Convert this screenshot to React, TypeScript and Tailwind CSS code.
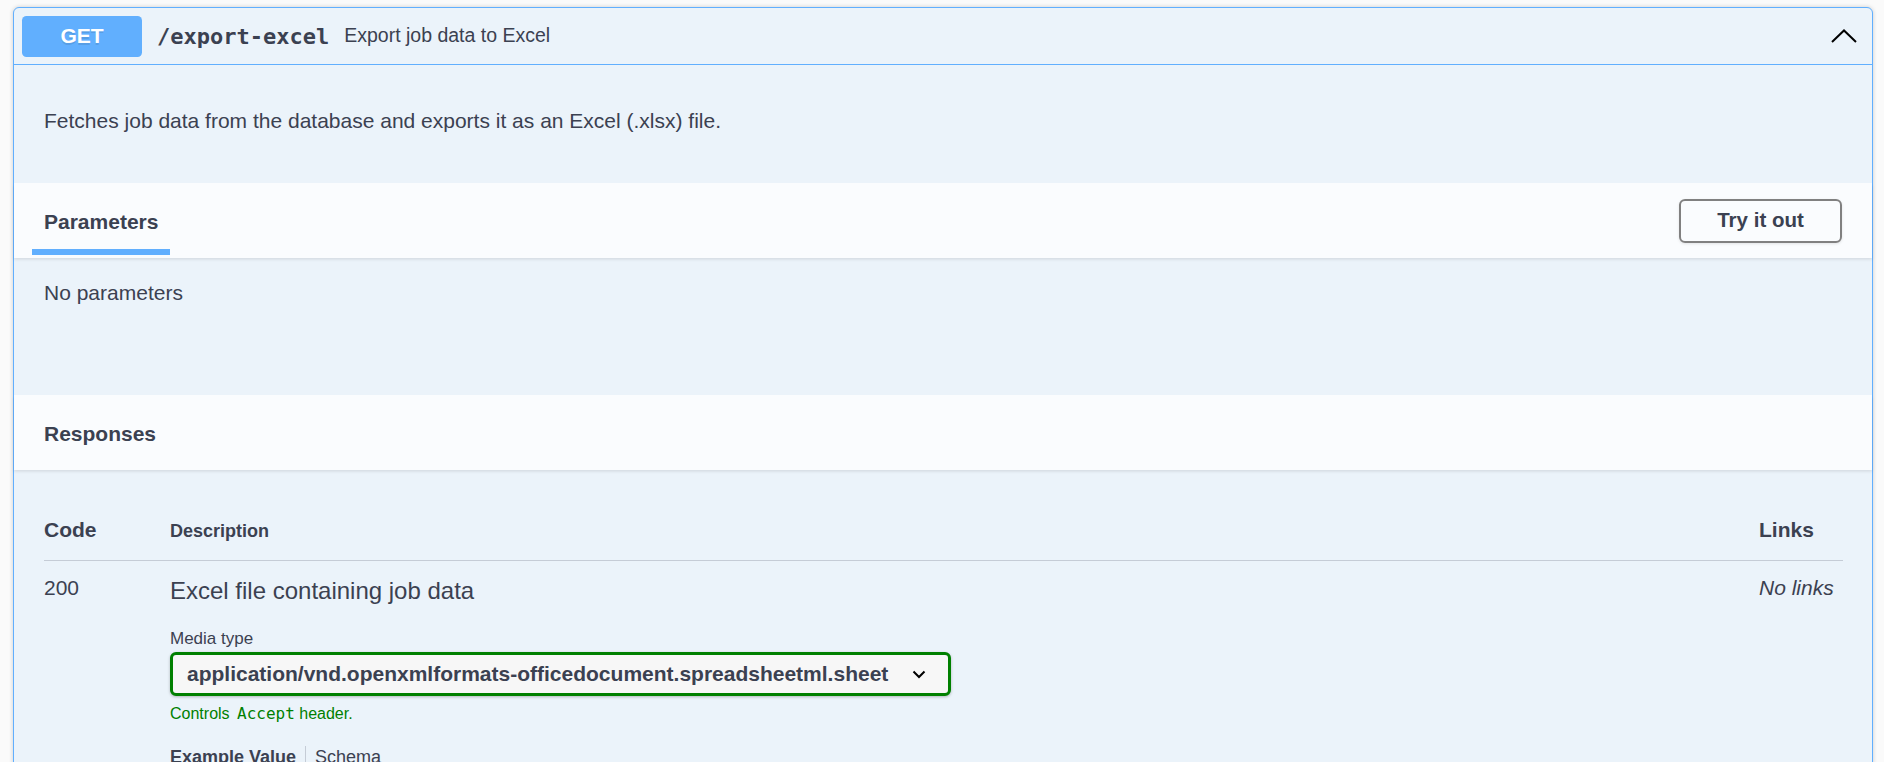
export default function App() {
  return (
    <div className="min-h-screen bg-[#fafafa] pt-[7px] pr-[11px] pb-[40px] pl-[13px] font-['Liberation_Sans',Arial,sans-serif] text-[#3b4151]">
      {/* operation block */}
      <div className="rounded-[6px] border border-[#61affe] bg-[#ebf3fa] shadow-[0_0_4.5px_rgba(0,0,0,0.19)]">
        {/* summary */}
        <div className="flex h-[57px] items-center border-b border-[#61affe] pr-[15px] pl-[8px]">
          <div className="flex h-[41px] w-[120px] items-center justify-center rounded-[4.5px] bg-[#61affe] text-[21px] font-bold text-white [text-shadow:0_1.5px_0_rgba(0,0,0,0.1)]">
            GET
          </div>
          <span className="px-[15px] font-['DejaVu_Sans_Mono',monospace] text-[22px] font-bold">/export-excel</span>
          <span className="text-[19.5px]">Export job data to Excel</span>
          <svg className="ml-auto" width="26" height="14" viewBox="0 0 26 14" fill="none">
            <polyline points="1,13 13,1.5 25,13" stroke="#000" strokeWidth="2" />
          </svg>
        </div>

        {/* description */}
        <div className="pt-[43px] pb-[50px] pl-[30px]">
          <p className="text-[21px] leading-[25px]">
            Fetches job data from the database and exports it as an Excel (.xlsx) file.
          </p>
        </div>

        {/* parameters header */}
        <div className="flex h-[75px] items-center justify-between bg-[#fafcfe] pr-[30px] pl-[18px] shadow-[0_1.5px_3px_rgba(0,0,0,0.1)]">
          <div className="relative flex h-full items-center px-[12px]">
            <h4 className="mt-[2px] text-[21px] leading-[25px] font-bold">Parameters</h4>
            <div className="absolute right-0 bottom-[3px] left-0 h-[6px] bg-[#61affe]" />
          </div>
          <button className="h-[44px] w-[163px] rounded-[6px] border-2 border-[#808080] text-[20.5px] font-bold shadow-[0_1px_3px_rgba(0,0,0,0.1)]">
            Try it out
          </button>
        </div>

        <div className="h-[137px] pt-[22px] pl-[30px]">
          <p className="text-[21px] leading-[25px]">No parameters</p>
        </div>

        {/* responses header */}
        <div className="flex h-[75px] items-center bg-[#fafcfe] pl-[30px] shadow-[0_1.5px_3px_rgba(0,0,0,0.1)]">
          <h4 className="mt-[2px] text-[21px] leading-[25px] font-bold">Responses</h4>
        </div>

        {/* responses table */}
        <div className="pr-[29px] pl-[30px]">
          <div className="grid grid-cols-[126px_1fr_84px] items-baseline border-b border-[#c5ccd6] pt-[47px] pb-[18px] font-bold">
            <div className="text-[21px] leading-[25px]">Code</div>
            <div className="text-[18px] leading-[22px]">Description</div>
            <div className="text-[21px] leading-[25px]">Links</div>
          </div>

          <div className="grid grid-cols-[126px_1fr_84px] items-start pt-[14px]">
            <div className="text-[21px] leading-[25px]">200</div>
            <div>
              <p className="mt-[1px] text-[24px] leading-[29px]">Excel file containing job data</p>
              <p className="mt-[24px] text-[17px] leading-[20px]">Media type</p>
              <div className="mt-[3px] flex h-[44px] w-[781px] items-center justify-between rounded-[6px] border-[3px] border-[#008000] bg-[#f7f7f7] pr-[22px] pl-[14px] shadow-[0_1px_3px_rgba(0,0,0,0.25)]">
                <span className="text-[21px] font-bold">
                  application/vnd.openxmlformats-officedocument.spreadsheetml.sheet
                </span>
                <svg width="14" height="9" viewBox="0 0 14 9" fill="none">
                  <polyline points="1.5,1.5 7,7 12.5,1.5" stroke="#000" strokeWidth="2" />
                </svg>
              </div>
              <p className="mt-[8px] text-[16px] leading-[20px] text-[#008000]">
                Controls <code className="ml-[3px] font-['DejaVu_Sans_Mono',monospace] text-[16px]">Accept</code> header.
              </p>
              <div className="mt-[22px] flex text-[18px] leading-[22px]">
                <span className="pr-[9px] font-bold">Example Value</span>
                <span className="border-l border-[#c5ccd6] pl-[9px]">Schema</span>
              </div>
              <div className="mt-[12px] h-[60px] w-[781px] rounded-[6px] bg-[#333]" />
            </div>
            <div className="text-[21px] leading-[25px] italic">No links</div>
          </div>
        </div>
      </div>
    </div>
  )
}
